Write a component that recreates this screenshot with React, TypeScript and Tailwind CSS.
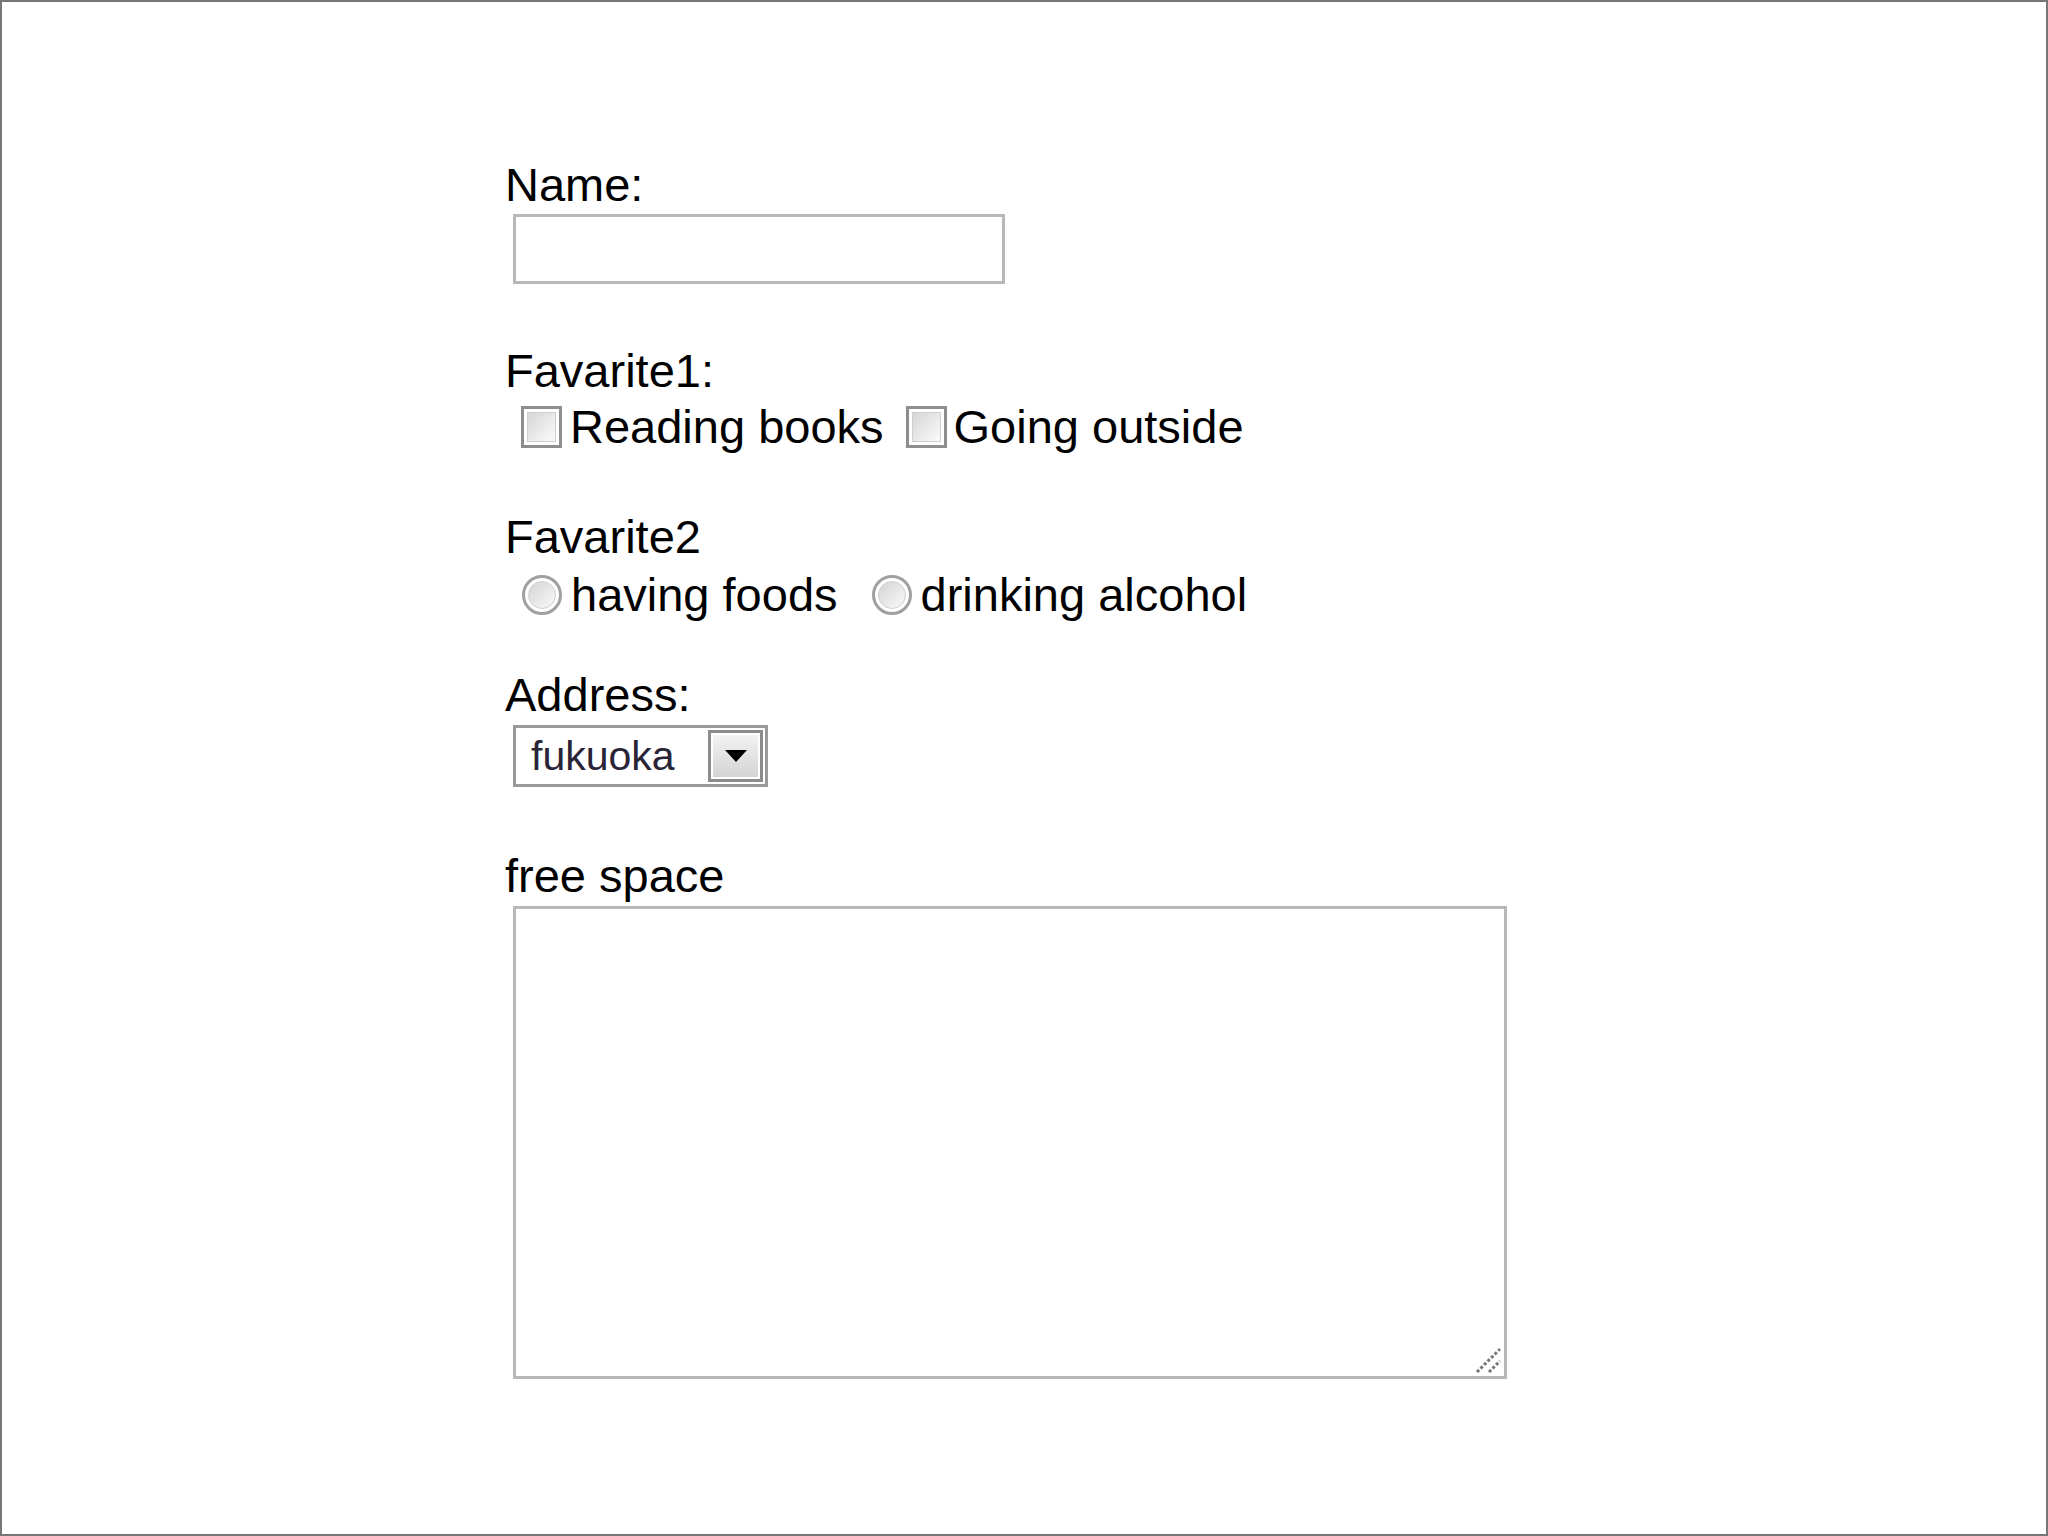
const font = { fontFamily: '"Liberation Sans", Arial, sans-serif' };

const Checkbox = () => (
  <span className="box-border flex h-[42px] w-[41px] shrink-0 border-[3px] border-[#8e8e8e] bg-white p-[3px]">
    <span className="block h-full w-full border border-[#cfcfcf] bg-gradient-to-br from-[#d6d6d6] to-[#fbfbfb]" />
  </span>
);

const Radio = () => (
  <span className="box-border flex h-[40px] w-[40px] shrink-0 rounded-full border-[3px] border-[#a0a0a0] bg-white p-[3px]">
    <span className="block h-full w-full rounded-full border border-[#d0d0d0] bg-gradient-to-br from-[#d4d4d4] to-[#fafafa]" />
  </span>
);

const Label = ({ children, className }: { children: React.ReactNode; className: string }) => (
  <div className={`text-[47px] leading-[46px] text-black ${className}`}>{children}</div>
);

export default function App() {
  return (
    <div
      className="box-border h-[1536px] w-[2048px] border-2 border-[#777777] bg-white pl-[503px] pt-[160px]"
      style={font}
    >
      {/* Name */}
      <Label className="">Name:</Label>
      <input
        type="text"
        className="ml-[8px] mt-[6px] box-border block h-[70px] w-[492px] border-[3px] border-[#b8b8b8] bg-white outline-none"
      />

      {/* Favarite1 */}
      <Label className="mt-[64px]">Favarite1:</Label>
      <div className="ml-[16px] mt-[9px] flex h-[48px] items-center text-[47px] leading-[46px] text-black">
        <Checkbox />
        <span className="ml-[8px]">Reading books</span>
        <span className="ml-[22px]">
          <Checkbox />
        </span>
        <span className="ml-[7px]">Going outside</span>
      </div>

      {/* Favarite2 */}
      <Label className="mt-[63px]">Favarite2</Label>
      <div className="ml-[17px] mt-[11px] flex h-[48px] items-center text-[47px] leading-[46px] text-black">
        <Radio />
        <span className="ml-[9px]">having foods</span>
        <span className="ml-[34px]">
          <Radio />
        </span>
        <span className="ml-[9px]">drinking alcohol</span>
      </div>

      {/* Address */}
      <Label className="mt-[53px]">Address:</Label>
      <div className="ml-[8px] mt-[7px] box-border flex h-[62px] w-[255px] items-center border-[3px] border-[#9a9a9a] bg-white pr-[2px]">
        <span className="ml-[15px] flex-1 text-[41px] leading-[41px] text-[#2a2438]">fukuoka</span>
        <span className="box-border flex h-[52px] w-[55px] items-center justify-center border-[3px] border-[#8c8c8c] bg-gradient-to-b from-[#f4f4f4] to-[#d2d2d2] shadow-[inset_0_0_0_2px_#ffffff]">
          <svg width="22" height="12" viewBox="0 0 22 12">
            <path d="M0 0 H22 L11 12 Z" fill="#000" />
          </svg>
        </span>
      </div>

      {/* free space */}
      <Label className="mt-[66px]">free space</Label>
      <div className="relative ml-[8px] mt-[7px] h-[473px] w-[994px]">
        <textarea className="box-border block h-full w-full resize-none border-[3px] border-[#b8b8b8] bg-white outline-none" />
        <svg className="absolute bottom-[6px] right-[6px]" width="26" height="26" viewBox="0 0 26 26">
          <path d="M2 25 L25 2" stroke="#777" strokeWidth="3" strokeDasharray="3 2" />
          <path d="M14 25 L25 14" stroke="#777" strokeWidth="3" strokeDasharray="3 2" />
        </svg>
      </div>
    </div>
  );
}
